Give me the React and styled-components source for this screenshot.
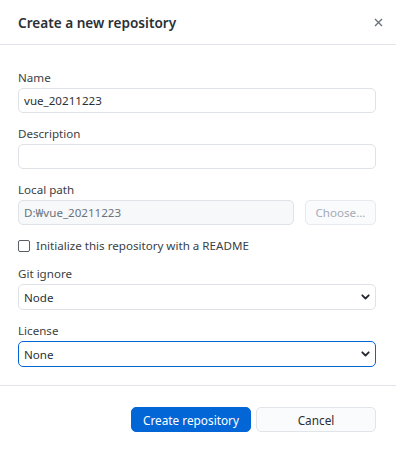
import React, { useState } from "react";
import styled, { createGlobalStyle } from "styled-components";

const GlobalStyle = createGlobalStyle`
  body {
    margin: 0;
    background: #fff;
    font-family: "Noto Sans", "Noto Sans CJK KR", sans-serif;
    color: #24292e;
  }
`;

const Dialog = styled.div`
  width: 396px;
  height: 452px;
  box-sizing: border-box;
  background: #fff;
  display: flex;
  flex-direction: column;
`;

const Header = styled.header`
  height: 44px;
  border-bottom: 1px solid #e1e4e8;
  display: flex;
  align-items: center;
  justify-content: space-between;
  padding: 0 12px 0 18px;
`;

const Title = styled.h1`
  margin: 0;
  font-size: 13.6px;
  font-weight: 600;
  color: #2b3036;
`;

const CloseButton = styled.button`
  border: 0;
  background: none;
  padding: 0;
  width: 12px;
  height: 12px;
  display: flex;
  align-items: center;
  justify-content: center;
  color: #6a737d;
  cursor: pointer;
`;

const Body = styled.form`
  padding: 25px 20px 18px 18px;
  display: flex;
  flex-direction: column;
  gap: 13px;
`;

const Field = styled.div`
  display: flex;
  flex-direction: column;
`;

const Label = styled.label`
  font-size: 11.6px;
  line-height: 16px;
  margin-bottom: 2px;
  color: #3a3f45;
`;

const TextInput = styled.input`
  box-sizing: border-box;
  height: 25px;
  width: 100%;
  border: 1px solid #dfe2e6;
  border-radius: 5px;
  padding: 0 5px;
  font-family: inherit;
  font-size: 11.6px;
  color: #2b3036;
  background: #fff;
  outline: none;

  &:disabled {
    background: #f6f8fa;
    color: #6a737d;
  }
`;

const PathRow = styled.div`
  display: flex;
  gap: 11px;
`;

const ChooseButton = styled.button`
  flex: none;
  width: 71px;
  height: 25px;
  border: 1px solid #e6e9ed;
  border-radius: 5px;
  background: #fafbfc;
  color: #a3aab2;
  font-family: inherit;
  font-size: 11.6px;
  padding: 0;
`;

const CheckRow = styled.label`
  display: flex;
  align-items: center;
  gap: 6px;
  height: 15px;
  font-size: 11.6px;
  color: #3a3f45;
`;

const Check = styled.input`
  appearance: none;
  margin: 0;
  width: 12px;
  height: 12px;
  border: 1px solid #5a5f66;
  border-radius: 2px;
  background: #fff;
`;

const SelectWrap = styled.div`
  position: relative;
`;

const Select = styled.select`
  appearance: none;
  box-sizing: border-box;
  width: 100%;
  height: 26px;
  border: ${(p) => (p.$focused ? "1.5px solid #0366d6" : "1px solid #dfe2e6")};
  border-radius: 5px;
  padding: 0 5px;
  font-family: inherit;
  font-size: 11.6px;
  color: #2b3036;
  background: #fff;
  outline: none;
`;

const Chevron = styled.svg`
  position: absolute;
  right: 6px;
  top: 50%;
  transform: translateY(-50%);
  pointer-events: none;
`;

const Footer = styled.footer`
  border-top: 1px solid #e1e4e8;
  padding: 21px 20px 0 0;
  display: flex;
  justify-content: flex-end;
  gap: 5px;
`;

const Button = styled.button`
  box-sizing: border-box;
  width: 120px;
  height: 25px;
  border-radius: 5px;
  font-family: inherit;
  font-size: 11.8px;
  padding: 0;
  cursor: pointer;
  border: 1px solid ${(p) => (p.$primary ? "#0366d6" : "#e1e4e8")};
  background: ${(p) => (p.$primary ? "#0366d6" : "#fafbfc")};
  color: ${(p) => (p.$primary ? "#fff" : "#2b3036")};
`;

const SelectField = ({ label, value, options, focused }) => (
  <Field>
    <Label>{label}</Label>
    <SelectWrap>
      <Select $focused={focused} defaultValue={value}>
        {options.map((o) => (
          <option key={o}>{o}</option>
        ))}
      </Select>
      <Chevron width="9" height="6" viewBox="0 0 9 6">
        <path d="M1.3 1.3 L4.5 4.5 L7.7 1.3" fill="none" stroke="#24292e" strokeWidth="1.8" strokeLinecap="round" strokeLinejoin="round" />
      </Chevron>
    </SelectWrap>
  </Field>
);

const App = () => {
  const [name, setName] = useState("vue_20211223");
  const [desc, setDesc] = useState("");

  return (
    <>
      <GlobalStyle />
      <Dialog>
        <Header>
          <Title>Create a new repository</Title>
          <CloseButton aria-label="Close">
            <svg width="9" height="9" viewBox="0 0 9 9">
              <path d="M1 1 L8 8 M8 1 L1 8" stroke="currentColor" strokeWidth="1.4" />
            </svg>
          </CloseButton>
        </Header>
        <Body onSubmit={(e) => e.preventDefault()}>
          <Field>
            <Label>Name</Label>
            <TextInput value={name} onChange={(e) => setName(e.target.value)} />
          </Field>
          <Field>
            <Label>Description</Label>
            <TextInput value={desc} onChange={(e) => setDesc(e.target.value)} />
          </Field>
          <Field>
            <Label>Local path</Label>
            <PathRow>
              <TextInput disabled value={"D:\u20A9vue_20211223"} readOnly />
              <ChooseButton type="button" disabled>
                Choose...
              </ChooseButton>
            </PathRow>
          </Field>
          <CheckRow>
            <Check type="checkbox" />
            Initialize this repository with a README
          </CheckRow>
          <SelectField label="Git ignore" value="Node" options={["None", "Node"]} />
          <SelectField label="License" value="None" options={["None", "MIT License"]} focused />
        </Body>
        <Footer>
          <Button $primary type="submit">
            Create repository
          </Button>
          <Button type="button">Cancel</Button>
        </Footer>
      </Dialog>
    </>
  );
};

export default App;
